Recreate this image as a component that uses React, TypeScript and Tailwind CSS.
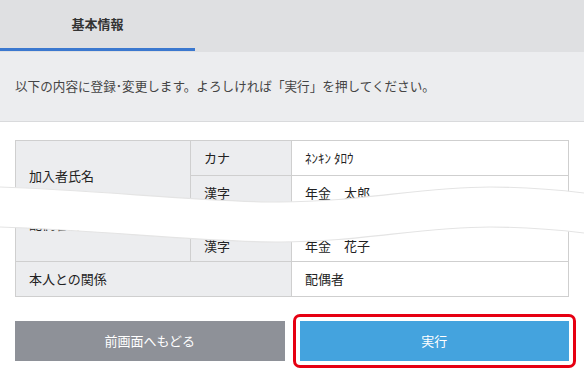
import type { FC } from 'react';

const font = { fontFamily: '"Noto Sans CJK JP", "Noto Sans", sans-serif' };

const cell = 'border-r border-b border-[#cfcfcf] flex items-center px-[13px] text-[13px] text-[#222]';

// torn-paper band drawn over the table
const Wave: FC = () => (
  <svg
    className="absolute left-0 top-[180px] pointer-events-none"
    width="584"
    height="70"
    viewBox="0 0 584 70"
  >
    <path
      d="M0,7 C100,10 200,22 280,22 C360,22 420,7 490,7 C530,7 560,10 584,13 L584,53 C560,50 530,47 490,47 C420,47 360,62 280,62 C200,62 100,50 0,47 Z"
      fill="#ffffff"
    />
    <path
      d="M0,7 C100,10 200,22 280,22 C360,22 420,7 490,7 C530,7 560,10 584,13"
      fill="none"
      stroke="#e4e4e4"
      strokeWidth="1.2"
    />
    <path
      d="M0,47 C100,50 200,62 280,62 C360,62 420,47 490,47 C530,47 560,50 584,53"
      fill="none"
      stroke="#e4e4e4"
      strokeWidth="1.2"
    />
  </svg>
);

const App: FC = () => {
  return (
    <div className="relative w-[584px] h-[376px] bg-white overflow-hidden" style={font}>
      {/* Tabs */}
      <div className="h-[52px] bg-[#dfe0e2] flex">
        <div className="w-[195px] h-[51px] border-b-[3px] border-[#3b78cf] flex items-center justify-center text-[13px] font-bold text-[#333]">
          基本情報
        </div>
      </div>

      {/* Notice */}
      <div className="h-[70px] bg-[#ecedef] border-b border-[#d9dadc] flex items-center px-[15px] text-[12.6px] text-[#444]">
        以下の内容に登録･変更します。よろしければ「実行」を押してください。
      </div>

      {/* Table */}
      <div className="mx-[15px] mt-[18px] border-l border-t border-[#cfcfcf] grid grid-cols-[175px_101px_1fr] grid-rows-[35px_35px_15px_36px_35px]">
        <div className={`${cell} row-span-2 bg-[#ecedef]`}>加入者氏名</div>
        <div className={`${cell} bg-[#ecedef]`}>カナ</div>
        <div className={`${cell} text-[12px]`}>ﾈﾝｷﾝ ﾀﾛｳ</div>
        <div className={`${cell} bg-[#ecedef]`}>漢字</div>
        <div className={cell}>年金　太郎</div>

        <div className={`${cell} row-span-2 bg-[#ecedef] !items-start pt-[3px]`}>配偶者氏名</div>
        <div className={`${cell} bg-[#ecedef]`} />
        <div className={cell} />
        <div className={`${cell} bg-[#ecedef] pt-[4px]`}>漢字</div>
        <div className={`${cell} pt-[4px]`}>年金　花子</div>

        <div className={`${cell} col-span-2 bg-[#ecedef]`}>本人との関係</div>
        <div className={cell}>配偶者</div>
      </div>

      {/* Buttons */}
      <div className="flex gap-[15px] px-[15px] mt-[24px]">
        <button className="flex-1 h-[40px] bg-[#8e9198] text-white text-[13px]">前画面へもどる</button>
        <div className="relative flex-1">
          <button className="w-full h-[40px] bg-[#44a3de] text-white text-[13px]">実行</button>
          <div className="absolute -inset-[7px] border-[3px] border-[#e60012] rounded-[7px] pointer-events-none" />
        </div>
      </div>

      <Wave />
    </div>
  );
};

export default App;
